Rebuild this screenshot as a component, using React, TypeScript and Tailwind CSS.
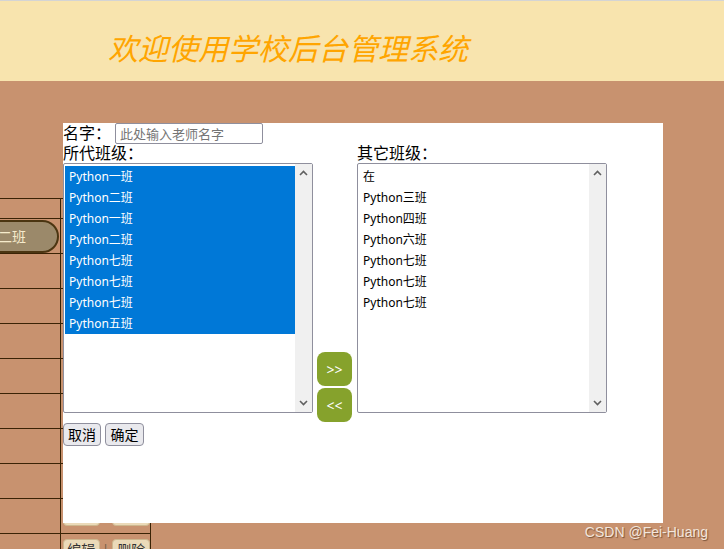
import React from "react";

const leftClasses = [
  "Python一班",
  "Python二班",
  "Python一班",
  "Python二班",
  "Python七班",
  "Python七班",
  "Python七班",
  "Python五班",
];

const otherClasses = ["在", "Python三班", "Python四班", "Python六班", "Python七班", "Python七班", "Python七班"];

const cjk = "font-['Noto_Sans','Noto_Sans_CJK_SC',sans-serif]";

function Chevron({ up }: { up?: boolean }) {
  return (
    <svg width="9" height="6" viewBox="0 0 9 6" className="block">
      <polyline
        points={up ? "1,5 4.5,1.5 8,5" : "1,1 4.5,4.5 8,1"}
        fill="none"
        stroke="#606060"
        strokeWidth="1.6"
      />
    </svg>
  );
}

function ListBox({ items, selected }: { items: string[]; selected?: boolean }) {
  return (
    <div className="flex h-[250px] w-[250px] rounded-[2px] border border-[#8f8f9d] bg-white">
      <div className="flex-1 pl-[1px] pt-[2px]">
        {items.map((item, i) => (
          <div
            key={i}
            className={`h-[21px] pl-[4px] text-[12px] leading-[21px] ${cjk} ${
              selected ? "bg-[#0078d7] text-white" : "text-black"
            }`}
          >
            {item}
          </div>
        ))}
      </div>
      {/* scrollbar */}
      <div className="flex w-[17px] flex-col items-center justify-between bg-[#f0f0f0] py-[6px]">
        <Chevron up />
        <Chevron />
      </div>
    </div>
  );
}

export default function App() {
  const rows = Array.from({ length: 10 });
  return (
    <div className="relative h-[549px] w-[724px] overflow-hidden bg-[#c8926f]">
      <div className="h-px bg-[#d4d4d4]" />
      <header className="h-[80px] bg-[#f8e4ae] pl-[108px] pt-[33px]">
        <h1 className={`whitespace-nowrap text-[30px] font-normal italic leading-[30px] text-[#ffa500] ${cjk}`}>
          欢迎使用学校后台管理系统
        </h1>
      </header>

      {/* table behind the dialog */}
      <div className="ml-[-41px] mt-[117px] w-[192px] border-t border-[#3a2305]">
        <div className="grid h-[20px] grid-cols-[102px_90px]">
          <div className="border-b border-r border-[#3a2305]" />
          <div className="border-b border-r border-[#3a2305]" />
        </div>
        {rows.map((_, i) => (
          <div key={i} className="grid h-[35px] grid-cols-[102px_90px]">
            <div className="flex items-center justify-end overflow-hidden border-b border-r border-[#3a2305] pr-[1px]">
              {i === 0 && (
                <div
                  className={`h-[33px] w-[140px] shrink-0 whitespace-nowrap rounded-full border-2 border-[#4b3511] bg-[#9b896a] pr-[31px] text-right text-[14px] leading-[29px] text-[#f6ebcc] ${cjk}`}
                >
                  Python二班
                </div>
              )}
            </div>
            <div className="flex items-start border-b border-r border-[#3a2305] pl-[2px] pt-[5px]">
              <button className={`h-[22px] w-[37px] rounded-[4px] border border-[#cdb88f] bg-[#ebdab9] text-[14px] leading-[20px] text-[#333] ${cjk}`}>
                编辑
              </button>
              <span className="w-[12px] text-center text-[12px] leading-[22px] text-[#6b5a45]">|</span>
              <button className={`ml-px h-[22px] w-[38px] rounded-[4px] border border-[#cdb88f] bg-[#ebdab9] text-[14px] leading-[20px] text-[#333] ${cjk}`}>
                删除
              </button>
            </div>
          </div>
        ))}
      </div>

      {/* dialog */}
      <div className={`absolute left-[63px] top-[123px] h-[400px] w-[600px] bg-white text-black ${cjk}`}>
        <div className="flex h-[21px] items-center gap-[4px]">
          <span className="text-[16px] leading-[21px]">名字：</span>
          <input
            placeholder="此处输入老师名字"
            className="h-[21px] w-[148px] rounded-[2px] border border-[#8f8f9d] px-[4px] text-[13px] outline-none placeholder:text-[#757575]"
          />
        </div>
        <div className="flex h-[278px] items-start">
          <div>
            <div className="h-[19px] text-[16px] leading-[19px]">所代班级：</div>
            <ListBox items={leftClasses} selected />
          </div>
          <div className="ml-[4px] flex w-[35px] flex-col gap-[2px] self-end">
            <button className="h-[34px] w-[35px] rounded-[8px] bg-[#86a22c] text-[14px] text-white">&gt;&gt;</button>
            <button className="h-[34px] w-[35px] rounded-[8px] bg-[#86a22c] text-[14px] text-white">&lt;&lt;</button>
          </div>
          <div className="ml-[5px]">
            <div className="h-[19px] text-[16px] leading-[19px]">其它班级：</div>
            <ListBox items={otherClasses} />
          </div>
        </div>
        <div className="mt-[1px] flex gap-[4px]">
          <button className="h-[23px] w-[38px] rounded-[4px] border border-[#8f8f9d] bg-[#e9e9ed] text-[14px] leading-[21px]">
            取消
          </button>
          <button className="h-[23px] w-[39px] rounded-[4px] border border-[#8f8f9d] bg-[#e9e9ed] text-[14px] leading-[21px]">
            确定
          </button>
        </div>
      </div>

      <div className="absolute bottom-[10px] right-[16px] font-['Liberation_Sans',sans-serif] text-[14px] leading-[14px] text-[#f3e6dc] [text-shadow:1px_1px_1px_#7a5238]">
        CSDN @Fei-Huang
      </div>
    </div>
  );
}
